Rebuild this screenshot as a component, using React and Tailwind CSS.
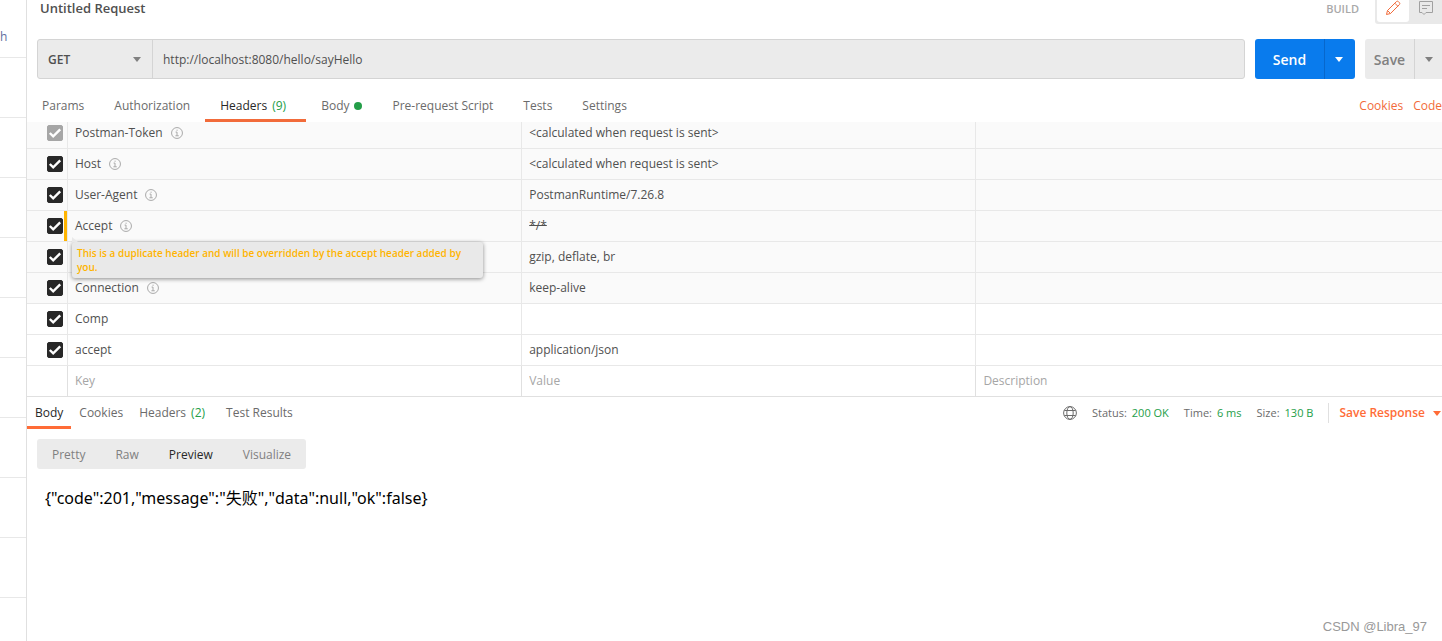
import React, { useState } from 'react';
import clsx from 'clsx';

const sidebarRows = [1, 2, 3, 4, 5, 6, 7, 8, 9];

const requestTabs = [
  { name: 'Params' },
  { name: 'Authorization' },
  { name: 'Headers', count: 9 },
  { name: 'Body', dot: true },
  { name: 'Pre-request Script' },
  { name: 'Tests' },
  { name: 'Settings' },
];

const responseTabs = [
  { name: 'Body' },
  { name: 'Cookies' },
  { name: 'Headers', count: 2 },
  { name: 'Test Results' },
];

const views = ['Pretty', 'Raw', 'Preview', 'Visualize'];

const headerRows = [
  { name: 'Postman-Token', value: '<calculated when request is sent>', auto: true, locked: true },
  { name: 'Host', value: '<calculated when request is sent>', auto: true },
  { name: 'User-Agent', value: 'PostmanRuntime/7.26.8', auto: true },
  {
    name: 'Accept',
    value: '*/*',
    auto: true,
    warning: 'This is a duplicate header and will be overridden by the accept header added by you.',
  },
  { name: '', value: 'gzip, deflate, br', auto: true },
  { name: 'Connection', value: 'keep-alive', auto: true },
  { name: 'Comp', value: '' },
  { name: 'accept', value: 'application/json' },
];

function Caret({ className }) {
  return (
    <svg viewBox="0 0 8 5" className={clsx('h-[5px] w-2 shrink-0', className)} fill="currentColor" aria-hidden="true">
      <path d="M0 0h8L4 5z" />
    </svg>
  );
}

function InfoIcon() {
  return (
    <svg viewBox="0 0 13 13" className="size-3 shrink-0 text-[#a3a3a3]" fill="none" stroke="currentColor" aria-hidden="true">
      <circle cx="6.5" cy="6.5" r="5.9" />
      <path d="M5 5.5h1.5v4M4.8 9.5h3.6M6 3.5h1.2" />
    </svg>
  );
}

function PencilIcon() {
  return (
    <svg viewBox="0 0 16 16" className="size-4" fill="none" stroke="currentColor" strokeLinejoin="round" aria-hidden="true">
      <path d="M1.5 14.5l1-4 8.7-8.7c.8-.8 1.6-.8 2.3-.1l.8.8c.7.7.7 1.5-.1 2.3L5.5 13.5z" />
      <path d="M2.5 10.5l3 3M9.8 3.2l3 3" />
    </svg>
  );
}

function CommentIcon() {
  return (
    <svg viewBox="0 0 14 14" className="size-[14px]" fill="none" stroke="currentColor" aria-hidden="true">
      <path d="M.5.5h13v11H7l-2 2-2-2H.5zM3 4.5h8M3 7.5h5" />
    </svg>
  );
}

function GlobeIcon() {
  return (
    <svg viewBox="0 0 14 14" className="size-[14px]" fill="none" stroke="currentColor" aria-hidden="true">
      <circle cx="7" cy="7" r="6.4" />
      <ellipse cx="7" cy="7" rx="3.2" ry="6.4" />
      <path d="M1.3 4.500h11.400M1.300 9.500h11.400" />
    </svg>
  );
}

function Checkbox({ label, locked }) {
  return (
    <span className="relative block size-4">
      <input
        type="checkbox"
        defaultChecked
        disabled={locked}
        aria-label={label}
        className="peer block size-4 appearance-none rounded-[2px] border border-[#a6a6a6] checked:border-[#282828] checked:bg-[#282828] disabled:border-[#a6a6a6] disabled:bg-[#a6a6a6]"
      />
      <svg
        viewBox="0 0 16 16"
        className="pointer-events-none absolute inset-0 hidden size-4 peer-checked:block"
        fill="none"
        stroke="#fff"
        strokeWidth="2.4"
        aria-hidden="true"
      >
        <path d="M2.8 8l3.4 3.4L13.2 4.3" />
      </svg>
    </span>
  );
}

function HeaderRow({ row }) {
  const { name, value, auto, locked, warning } = row;
  return (
    <tr className={clsx('h-[31px]', auto && 'bg-[#fafafa]')}>
      <td className="relative border-r border-b border-[#e8e8e8] pl-5">
        <Checkbox label={name || value} locked={locked} />
        {warning && <span className="absolute inset-y-0 right-0 w-[3px] bg-[#ffb400]" />}
      </td>
      <td className="relative border-r border-b border-[#e8e8e8] px-[7px]">
        <div className="flex items-center gap-2">
          <span>{name}</span>
          {auto && name && <InfoIcon />}
        </div>
        {warning && (
          <div
            role="tooltip"
            className="absolute top-full left-1 z-10 mt-px w-[411px] rounded-[3px] bg-[#e9e9e9] py-1 pr-4 pl-[5px] text-[10px] leading-[14px] font-semibold text-[#ffb400] shadow-[0_1px_4px_rgba(0,0,0,0.45)]"
          >
            <svg viewBox="0 0 6 5" className="absolute bottom-full left-0 h-[5px] w-1.5" fill="#e9e9e9" aria-hidden="true">
              <path d="M0 0l6 5H0z" />
            </svg>
            {warning}
          </div>
        )}
      </td>
      <td className={clsx('border-r border-b border-[#e8e8e8] px-[7px]', warning && 'line-through')}>{value}</td>
      <td className="border-b border-[#e8e8e8]" />
    </tr>
  );
}

export default function App() {
  const [tab, setTab] = useState('Headers');
  const [responseTab, setResponseTab] = useState('Body');
  const [view, setView] = useState('Preview');

  return (
    <div className="relative flex min-h-screen overflow-hidden bg-white font-['Open_Sans','Noto_Sans_CJK_SC',sans-serif] text-xs text-[#505050]">
      <aside className="flex w-[27px] shrink-0 flex-col border-r border-[#e0e0e0]">
        <div className="flex h-[58px] shrink-0 items-center border-b border-[#e8e8e8] pt-4 text-[#5f6f9e]">h</div>
        {sidebarRows.map((row) => (
          <div key={row} className="h-15 shrink-0 border-b border-[#e8e8e8]" />
        ))}
      </aside>

      <main className="flex min-w-0 flex-1 flex-col">
        <header className="flex h-[39px] items-start justify-between pl-[13px]">
          <h1 className="text-[13px] leading-4 font-semibold">Untitled Request</h1>
          <div className="flex items-start">
            <span className="mr-4 text-[11px] leading-[18px] font-semibold text-[#a9a9a9]">BUILD</span>
            <div className="flex h-6 rounded-bl-[3px] bg-[#e9e9e9] pb-0.5 pl-0.5">
              <button aria-label="Edit" className="flex w-8 justify-center rounded-b-[3px] bg-white text-[#f26b3a]">
                <PencilIcon />
              </button>
              <button aria-label="Comments" className="flex w-[33px] justify-center pt-px text-[#a0a0a0]">
                <CommentIcon />
              </button>
            </div>
          </div>
        </header>

        <div className="flex h-10 gap-2.5 pl-2.5">
          <div className="flex min-w-0 flex-1 rounded-[3px] border border-[#d4d4d4] bg-[#ebebeb]">
            <div className="relative flex w-[115px] shrink-0 border-r border-[#d4d4d4]">
              <select aria-label="Method" defaultValue="GET" className="w-full appearance-none bg-transparent px-2.5 pt-0.5 font-semibold">
                <option>GET</option>
                <option>POST</option>
              </select>
              <Caret className="pointer-events-none absolute top-[17px] right-[11px] text-[#808080]" />
            </div>
            <input
              aria-label="Request URL"
              defaultValue="http://localhost:8080/hello/sayHello"
              className="min-w-0 flex-1 bg-transparent px-2.5 pt-0.5 outline-none"
            />
          </div>
          <div className="flex rounded-[3px] bg-[#097bed] text-white">
            <button className="w-[69px] pt-0.5 text-sm font-semibold">Send</button>
            <button aria-label="Send options" className="flex w-[31px] items-center border-l border-[#0767cc] pl-2.5">
              <Caret />
            </button>
          </div>
          <div className="flex rounded-l-[3px] bg-[#ebebeb] text-[#808080]">
            <button className="w-[49px] pt-0.5 text-sm font-semibold">Save</button>
            <button aria-label="Save options" className="flex w-7 items-center border-l border-[#d4d4d4] pl-2.5">
              <Caret />
            </button>
          </div>
        </div>

        <nav className="mt-2.5 flex h-[33px] justify-between">
          <div className="flex">
            {requestTabs.map((item) => (
              <button
                key={item.name}
                onClick={() => setTab(item.name)}
                className={clsx(
                  'flex items-center border-b-3 px-[15px] pt-[3px]',
                  tab === item.name ? 'border-[#f26b3a] text-[#282828]' : 'border-transparent text-[#6b6b6b]'
                )}
              >
                {item.name}
                {item.count && <span className="mr-[5px] ml-[5px] text-[#249e48]">({item.count})</span>}
                {item.dot && <span className="ml-[5px] size-2 rounded-full bg-[#249e48]" />}
              </button>
            ))}
          </div>
          <div className="flex items-center gap-2.5 text-[#f26b3a]">
            <a href="#cookies">Cookies</a>
            <a href="#code">Code</a>
          </div>
        </nav>

        <div className="overflow-hidden">
          <table className="-mt-1 w-full table-fixed border-separate border-spacing-0 text-left">
            <colgroup>
              <col className="w-[41px]" />
              <col className="w-[32.1%]" />
              <col className="w-[32.1%]" />
              <col />
            </colgroup>
            <tbody>
              {headerRows.map((row) => (
                <HeaderRow key={row.name + row.value} row={row} />
              ))}
              <tr className="h-[31px]">
                <td className="border-r border-b border-[#e0e0e0]" />
                {['Key', 'Value', 'Description'].map((field) => (
                  <td key={field} className="border-r border-b border-[#e0e0e0] px-[7px] last:border-r-0">
                    <input
                      aria-label={field}
                      placeholder={field}
                      className="block w-full outline-none placeholder:text-[#a6a6a6]"
                    />
                  </td>
                ))}
              </tr>
            </tbody>
          </table>
        </div>

        <div className="flex h-8 justify-between">
          <div className="flex">
            {responseTabs.map((item) => (
              <button
                key={item.name}
                onClick={() => setResponseTab(item.name)}
                className={clsx(
                  'flex items-center border-b-3 px-2 pt-0.5',
                  responseTab === item.name ? 'border-[#ff6c37] text-[#282828]' : 'border-transparent text-[#6b6b6b]'
                )}
              >
                {item.name}
                {item.count && <span className="mr-[5px] ml-[5px] text-[#249e48]">({item.count})</span>}
              </button>
            ))}
          </div>
          <div className="flex items-center text-[11px] text-[#6b6b6b]">
            <GlobeIcon />
            <dl className="ml-[15px] flex gap-[15px]">
              {[
                ['Status:', '200 OK'],
                ['Time:', '6 ms'],
                ['Size:', '130 B'],
              ].map(([label, value]) => (
                <div key={label} className="flex gap-[5px]">
                  <dt>{label}</dt>
                  <dd className="text-[#249e48]">{value}</dd>
                </div>
              ))}
            </dl>
            <button className="ml-[15px] flex h-5 items-center gap-2 border-l border-[#e0e0e0] pr-px pl-2.5 text-xs font-semibold text-[#ff6c37]">
              Save Response
              <Caret />
            </button>
          </div>
        </div>

        <div className="mt-2.5 ml-2.5 flex h-[30px] w-fit rounded-[3px] bg-[#ebebeb]">
          {views.map((name) => (
            <button
              key={name}
              onClick={() => setView(name)}
              className={clsx('px-[15px] pt-0.5', view === name ? 'text-[#282828]' : 'text-[#808080]')}
            >
              {name}
            </button>
          ))}
        </div>

        <p className="mt-[17px] ml-[18px] font-['Noto_Sans','Noto_Sans_CJK_SC',sans-serif] text-base leading-6 text-black">
          {'{"code":201,"message":"失败","data":null,"ok":false}'}
        </p>
      </main>

      <span className="absolute right-[15px] bottom-1.5 font-['Liberation_Sans',sans-serif] text-[13px] text-[#999]">
        CSDN @Libra_97
      </span>
    </div>
  );
}
